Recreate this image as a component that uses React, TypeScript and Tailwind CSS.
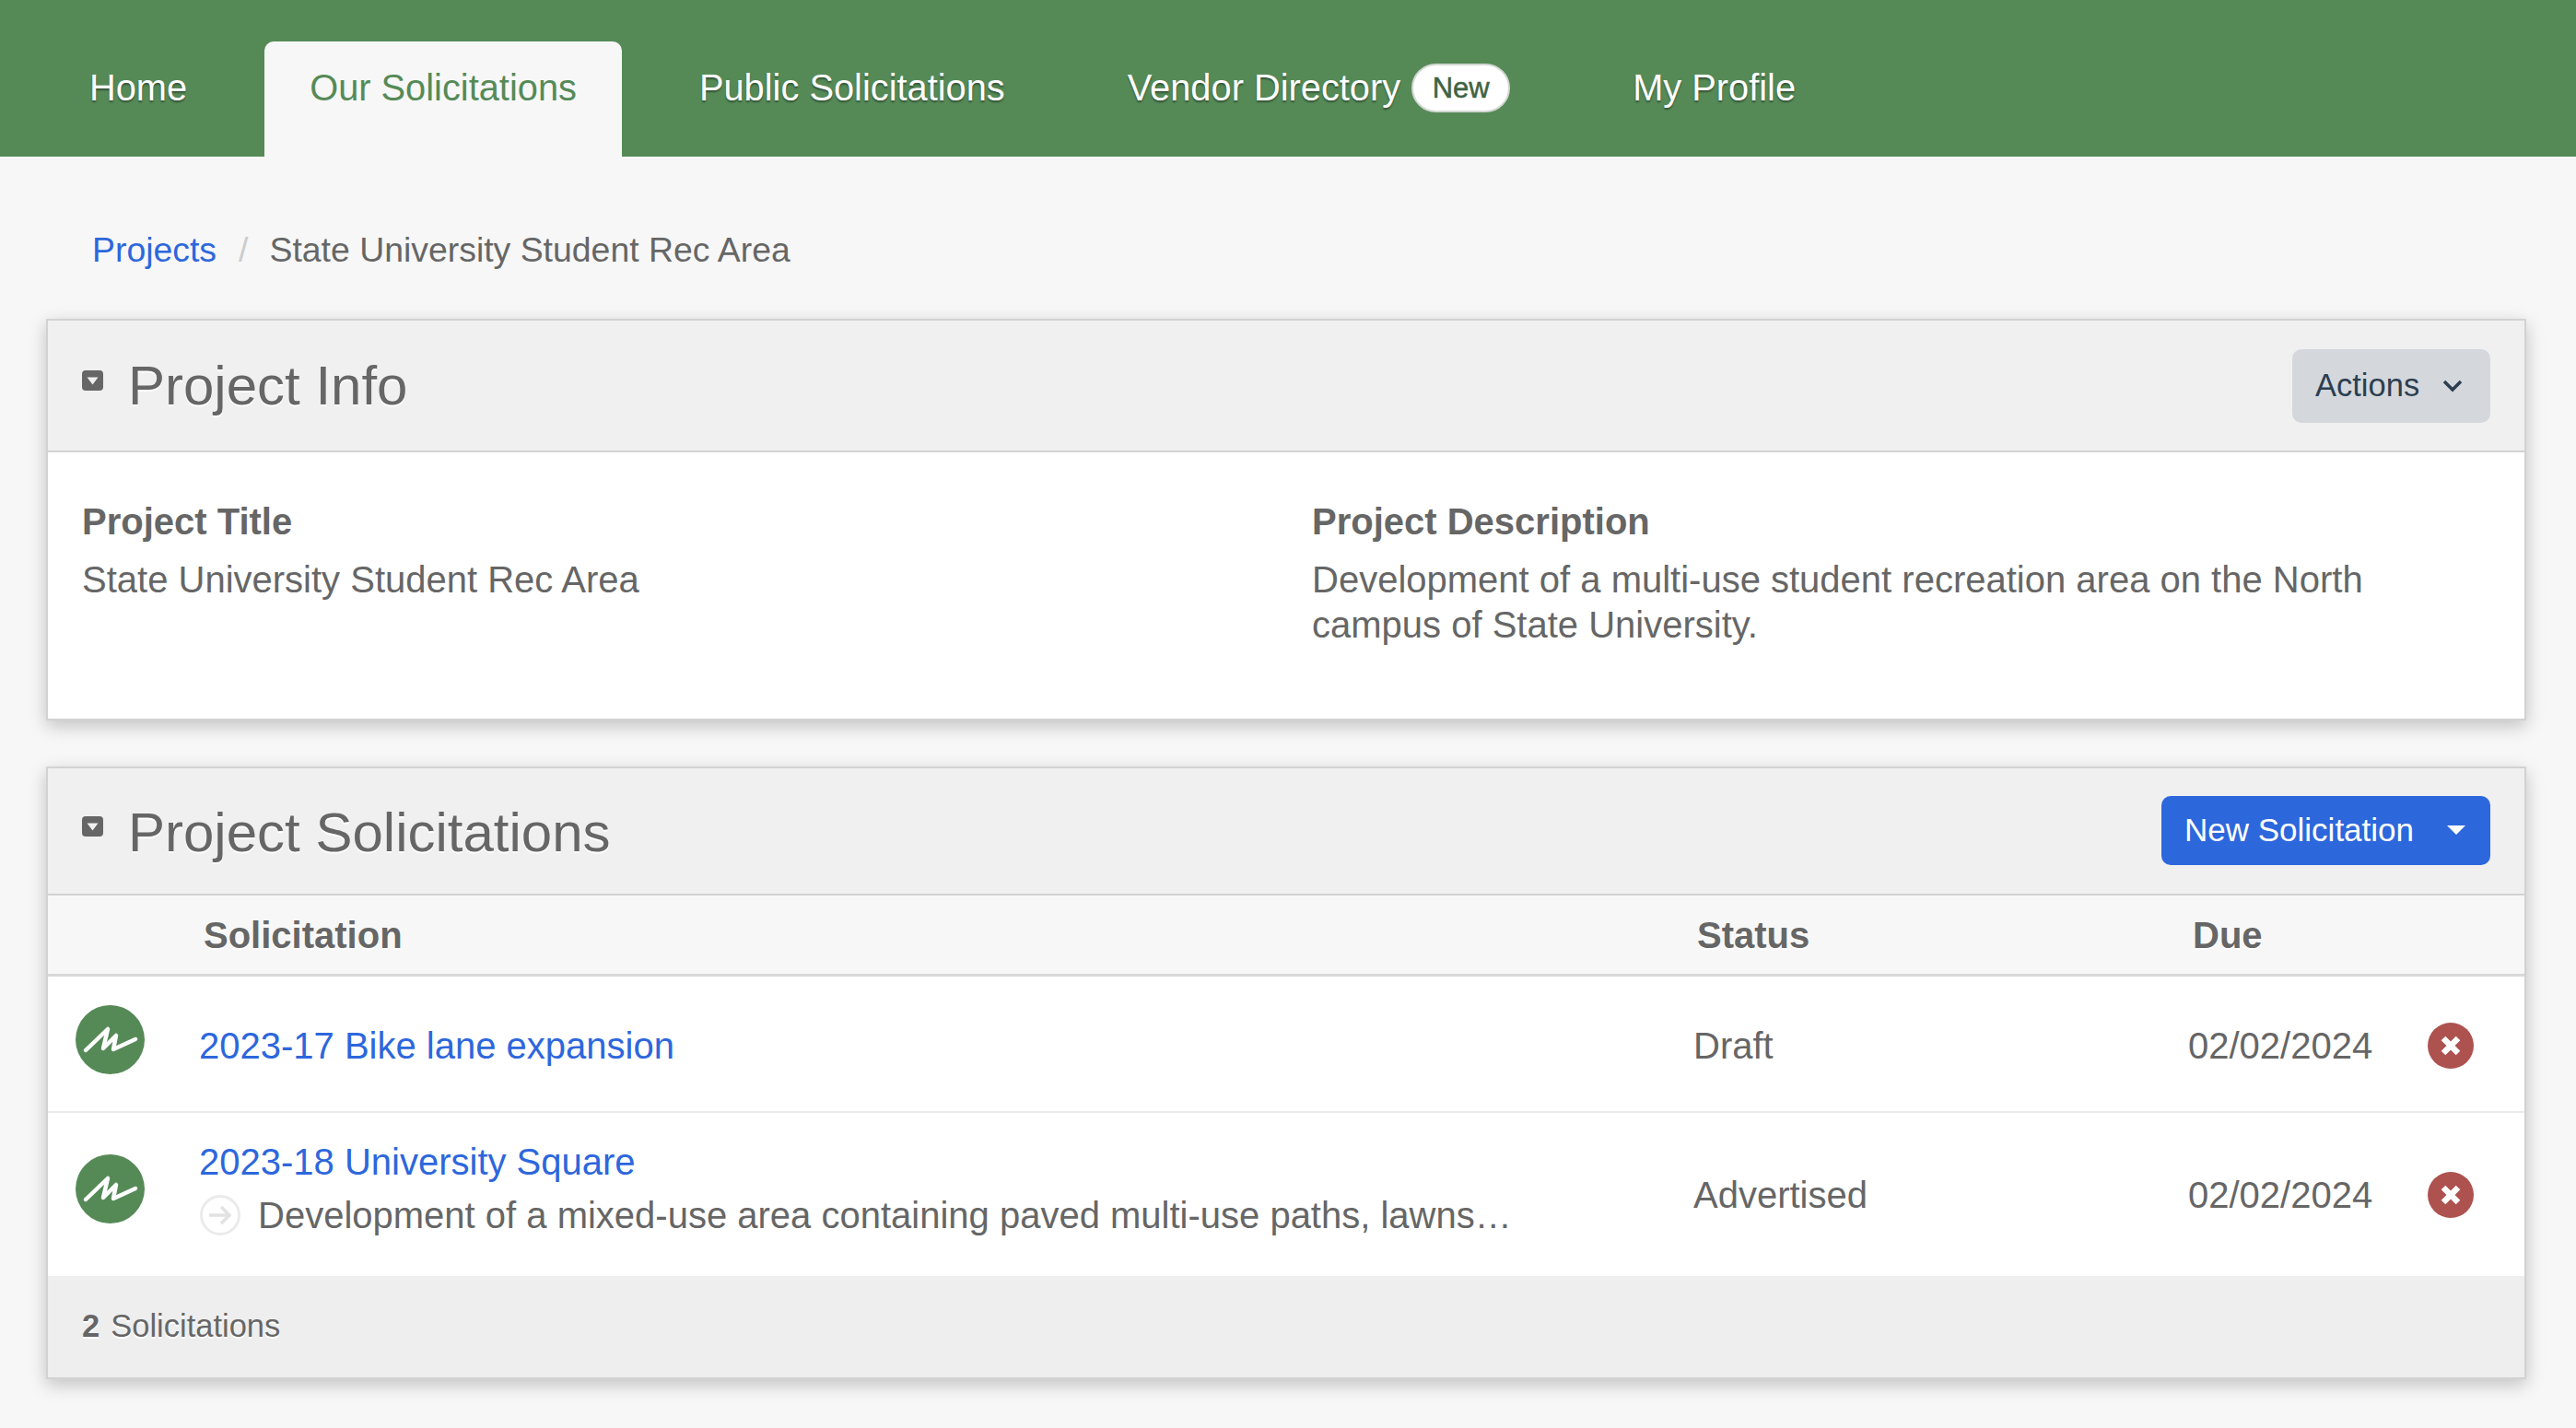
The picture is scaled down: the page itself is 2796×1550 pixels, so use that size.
import * as React from "react";

// Small caret square in the panel headers
function CollapseIcon() {
  return (
    <svg width="23" height="23" viewBox="0 0 23 23" className="shrink-0 mt-[-10px]">
      <rect x="0" y="0" width="23" height="22" rx="4" fill="#666666" />
      <path d="M5.5 7.5h12L11.5 15.5z" fill="#f0f0f0" />
    </svg>
  );
}

function Avatar({ className = "" }: { className?: string }) {
  return (
    <div className={`w-[75px] h-[75px] rounded-full bg-[#558a57] flex items-center justify-center ${className}`}>
      <svg width="75" height="75" viewBox="0 0 75 75">
        <path
          d="M11 49 L35 26 L30 47 L44 33 L41 48 L65 37"
          fill="none"
          stroke="#ffffff"
          strokeWidth="4.5"
          strokeLinecap="round"
          strokeLinejoin="round"
        />
      </svg>
    </div>
  );
}

function DeleteIcon() {
  return (
    <div className="w-[50px] h-[50px] rounded-full bg-[#ad524f] flex items-center justify-center">
      <svg width="30" height="30" viewBox="0 0 30 30">
        <path d="M7 7 L23 23 M23 7 L7 23" stroke="#ffffff" strokeWidth="6.5" />
      </svg>
    </div>
  );
}

function ArrowCircle() {
  return (
    <svg width="46" height="46" viewBox="0 0 46 46" className="shrink-0">
      <circle cx="23" cy="23" r="20.5" fill="none" stroke="#ebebeb" strokeWidth="3" />
      <path d="M11 23h22M24 14l9 9-9 9" fill="none" stroke="#e2e2e2" strokeWidth="3.5" />
    </svg>
  );
}

function PanelHeader({
  title,
  heightClass,
  titleClass = "",
  children,
}: {
  title: string;
  heightClass: string;
  titleClass?: string;
  children: React.ReactNode;
}) {
  return (
    <div className={`flex items-center justify-between bg-[#f0f0f0] border-b-2 border-[#d2d2d2] pl-[37px] pr-[37px] ${heightClass}`}>
      <div className="flex items-center gap-[27px]">
        <CollapseIcon />
        <h2 className={`text-[60px] leading-none font-normal text-[#666666] [text-shadow:0_2px_0_#ffffff] ${titleClass}`}>{title}</h2>
      </div>
      {children}
    </div>
  );
}

const tabs = ["Home", "Our Solicitations", "Public Solicitations", "Vendor Directory", "My Profile"];

const rowGrid = "grid grid-cols-[134px_1622px_537px_260px_1fr] items-center pl-[30px]";

export default function App() {
  return (
    <div className="min-h-[1550px] bg-[#f7f7f7] font-['Liberation_Sans',Arial,sans-serif] text-[40px] text-[#666666]">
      <nav className="h-[170px] bg-[#558a57] flex items-end pl-[48px] gap-[35px] text-[39.8px]">
        {tabs.map((tab) => (
          <a
            key={tab}
            className={
              tab === "Our Solicitations"
                ? "h-[125px] px-[49px] pt-[27px] rounded-t-[10px] bg-[#f7f7f7] text-[#558a57] leading-[46px]"
                : "h-[125px] px-[49px] pt-[27px] text-white leading-[46px] flex items-start gap-[12px] [text-shadow:0_2px_2px_rgba(0,0,0,0.4)]"
            }
          >
            {tab}
            {tab === "Vendor Directory" && (
              <span className="mt-[-3px] h-[53px] w-[107px] rounded-full bg-white border-2 border-[#d3d8d3] text-[#3f6341] text-[31px] [-webkit-text-stroke:0.5px_#3f6341] flex items-center justify-center [text-shadow:none]">
                New
              </span>
            )}
          </a>
        ))}
      </nav>

      <div className="h-[176px] pl-[100px] pt-[26px] flex items-center text-[37.4px]">
        <a className="text-[#2d67dc]">Projects</a>
        <span className="ml-[24px] mr-[23px] text-[#cccccc]">/</span>
        <span>State University Student Rec Area</span>
      </div>

      <section className="w-[2692px] ml-[50px] bg-white border-2 border-[#d2d2d2] shadow-[0_6px_18px_rgba(0,0,0,0.22)]">
        <PanelHeader title="Project Info" heightClass="h-[143px]">
          <button className="w-[215px] h-[80px] rounded-[10px] bg-[#d4d8dc] text-[#2c3e50] text-[34.5px] flex items-center pl-[25px]">
            Actions
            <svg width="22" height="14" viewBox="0 0 22 14" className="ml-[25px]">
              <path d="M2 2l9 9 9-9" fill="none" stroke="#2c3e50" strokeWidth="3.5" />
            </svg>
          </button>
        </PanelHeader>
        <div className="grid grid-cols-[1335px_1fr] h-[289px] pl-[37px] pt-[52px] pr-[120px]">
          <div>
            <div className="font-bold leading-[46px]">Project Title</div>
            <div className="mt-[16px] leading-[49px]">State University Student Rec Area</div>
          </div>
          <div>
            <div className="font-bold leading-[46px]">Project Description</div>
            <div className="mt-[16px] leading-[49px]">
              Development of a multi-use student recreation area on the North campus of State University.
            </div>
          </div>
        </div>
      </section>

      <section className="w-[2692px] ml-[50px] mt-[50px] bg-white border-2 border-[#d2d2d2] shadow-[0_6px_18px_rgba(0,0,0,0.22)]">
        <PanelHeader title="Project Solicitations" heightClass="h-[138px]" titleClass="pt-[4px]">
          <button className="w-[357px] h-[75px] mb-[2px] rounded-[10px] bg-[#2d67dc] text-white text-[35px] flex items-center pl-[25px]">
            New Solicitation
            <svg width="20" height="10" viewBox="0 0 20 10" className="ml-[36px]">
              <path d="M0 0h20L10 10z" fill="#ffffff" />
            </svg>
          </button>
        </PanelHeader>

        <div className={`${rowGrid} h-[88px] bg-[#f7f7f7] border-b-[3px] border-[#d8d8d8] font-bold [text-shadow:0_2px_0_#ffffff]`}>
          <div />
          <div className="pl-[5px]">Solicitation</div>
          <div className="pl-[4px]">Status</div>
          <div className="pl-[5px]">Due</div>
          <div />
        </div>

        <div className={`${rowGrid} h-[148px] pt-[3px] border-b-2 border-[#ebebeb]`}>
          <Avatar className="mb-[13px]" />
          <a className="text-[#2d67dc]">2023-17 Bike lane expansion</a>
          <div>Draft</div>
          <div>02/02/2024</div>
          <DeleteIcon />
        </div>

        <div className={`${rowGrid} h-[177px]`}>
          <Avatar className="mb-[12px]" />
          <div className="pb-[13px]">
            <a className="block text-[#2d67dc] leading-[46px]">2023-18 University Square</a>
            <div className="flex items-center gap-[18px] mt-[12px] w-[1430px]">
              <ArrowCircle />
              <span className="truncate leading-[46px]">
                Development of a mixed-use area containing paved multi-use paths, lawns…
              </span>
            </div>
          </div>
          <div>Advertised</div>
          <div>02/02/2024</div>
          <DeleteIcon />
        </div>

        <div className="h-[110px] bg-[#eeeeee] pl-[37px] flex items-center text-[34.5px] [text-shadow:0_2px_0_#ffffff]">
          <span className="font-bold mr-[12px]">2</span> Solicitations
        </div>
      </section>
    </div>
  );
}
